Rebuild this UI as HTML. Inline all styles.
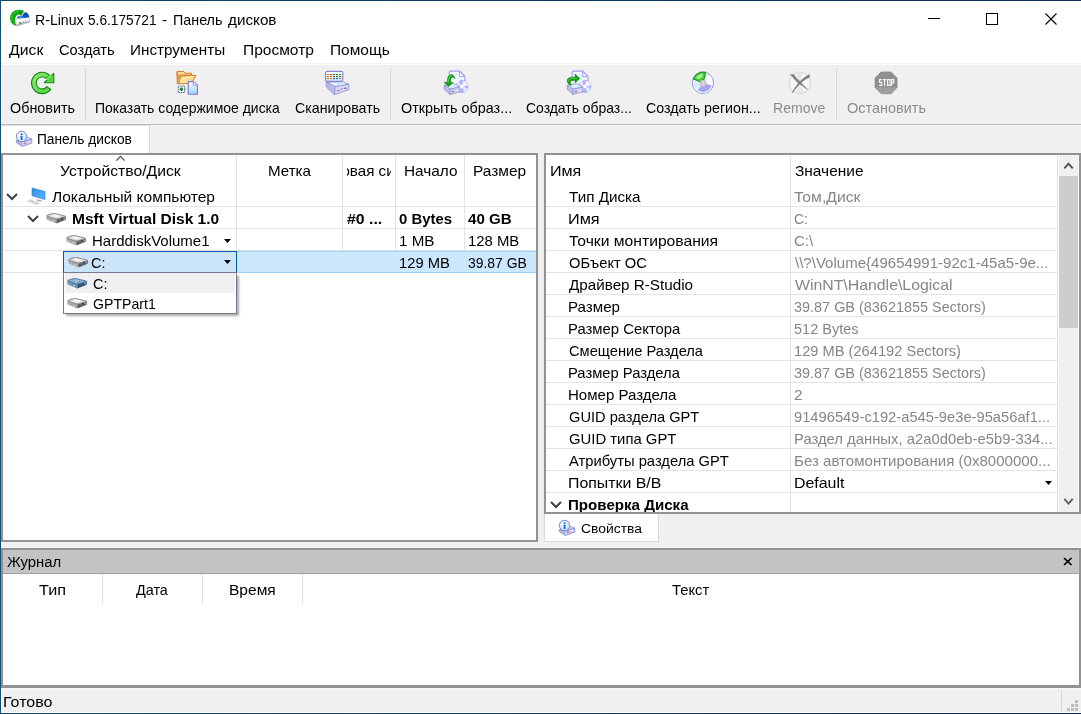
<!DOCTYPE html>
<html><head><meta charset="utf-8"><title>R-Linux</title>
<style>
html,body{margin:0;padding:0;}
body{width:1081px;height:714px;position:relative;overflow:hidden;background:#f0f0f0;font-family:"Liberation Sans",sans-serif;}
body>div,body>svg,body>span{position:absolute;}
.t{white-space:nowrap;transform-origin:0 0;display:block;}
</style></head><body>
<div style="left:0px;top:0px;width:1081px;height:64px;background:#fff;"></div>
<div style="left:0px;top:64px;width:1081px;height:60px;background:#f0f0f0;"></div>
<div style="left:0px;top:63px;width:1081px;height:1px;background:#f3f4f6;"></div>
<div style="left:0px;top:64px;width:1081px;height:1px;background:#fff;"></div>
<div style="left:1px;top:64px;width:1px;height:60px;background:#fff;"></div>
<div style="left:0px;top:124px;width:1081px;height:1px;background:#b9b9b9;"></div>
<div style="left:0px;top:125px;width:1081px;height:28px;background:#f0f0f0;"></div>
<div style="left:0px;top:123px;width:1081px;height:1px;background:#f4f4f4;"></div>
<div style="left:150px;top:125px;width:931px;height:1px;background:#f6f6f6;"></div>
<div style="left:1px;top:125px;width:148px;height:28px;background:#fff;"></div>
<div style="left:1px;top:125px;width:149px;height:1px;background:#dedede;"></div>
<div style="left:149px;top:125px;width:1px;height:28px;background:#d9d9d9;"></div>
<div style="left:1px;top:153px;width:537px;height:389px;background:#929292;"></div>
<div style="left:3px;top:155px;width:533px;height:385px;background:#fff;"></div>
<div style="left:544px;top:153px;width:537px;height:361px;background:#929292;"></div>
<div style="left:546px;top:155px;width:533px;height:357px;background:#fff;"></div>
<div style="left:544px;top:514px;width:115px;height:28px;background:#d9d9d9;"></div>
<div style="left:545px;top:514px;width:113px;height:27px;background:#fff;"></div>
<div style="left:1px;top:548px;width:1080px;height:140px;background:#929292;"></div>
<div style="left:3px;top:550px;width:1076px;height:23px;background:#c3c3c3;"></div>
<div style="left:3px;top:573px;width:1076px;height:1px;background:#a2a2a2;"></div>
<div style="left:3px;top:574px;width:1076px;height:111px;background:#fff;"></div>
<div style="left:0px;top:688px;width:1081px;height:25px;background:#f0f0f0;"></div>
<div style="left:0px;top:688px;width:1081px;height:1px;background:#f8f8f8;"></div>
<div style="left:0px;top:712px;width:1081px;height:1px;background:#fdfdfd;"></div>
<div style="left:0px;top:542px;width:540px;height:1px;background:#f7f7f7;"></div>
<div style="left:0px;top:547px;width:1081px;height:1px;background:#f6f6f6;"></div>
<div style="left:1px;top:688px;width:1px;height:25px;background:#fff;"></div>
<div style="left:0px;top:0px;width:1px;height:714px;background:#16506f;"></div>
<div style="left:0px;top:0px;width:1081px;height:1px;background:none;background-image:linear-gradient(to right,#0f4a69,#0a2b57);"></div>
<div style="left:0px;top:713px;width:1081px;height:1px;background:none;background-image:linear-gradient(to right,#124d6d,#0b2c56);"></div>
<span class="t" style="left:35.17px;top:11px;font-size:14.5px;line-height:19px;color:#000;transform:scaleX(0.9727)">R-Linux</span>
<span class="t" style="left:88.33px;top:11px;font-size:14.5px;line-height:19px;color:#000;transform:scaleX(0.9449)">5.6.175721</span>
<span class="t" style="left:162.47px;top:11px;font-size:14.5px;line-height:19px;color:#000;transform:scaleX(1.0509)">-</span>
<span class="t" style="left:173.15px;top:11px;font-size:14.5px;line-height:19px;color:#000;transform:scaleX(0.9863)">Панель</span>
<span class="t" style="left:227.51px;top:11px;font-size:14.5px;line-height:19px;color:#000;transform:scaleX(1.0517)">дисков</span>
<div style="left:928px;top:18px;width:12px;height:1px;background:#000;"></div>
<svg style="left:985px;top:12px" width="14" height="14"><rect x="1.5" y="1.5" width="11" height="11" fill="none" stroke="#000" stroke-width="1"/></svg>
<svg style="left:1044px;top:12px" width="14" height="14"><path d="M1.5 1.5L12.5 12.5M12.5 1.5L1.5 12.5" stroke="#000" stroke-width="1.1" fill="none"/></svg>
<span class="t" style="left:9.00px;top:41px;font-size:14.5px;line-height:19px;color:#000;transform:scaleX(1.0897)">Диск</span>
<span class="t" style="left:58.66px;top:41px;font-size:14.5px;line-height:19px;color:#000;transform:scaleX(1.0082)">Создать</span>
<span class="t" style="left:130.24px;top:41px;font-size:14.5px;line-height:19px;color:#000;transform:scaleX(1.0524)">Инструменты</span>
<span class="t" style="left:242.51px;top:41px;font-size:14.5px;line-height:19px;color:#000;transform:scaleX(1.0704)">Просмотр</span>
<span class="t" style="left:330.23px;top:41px;font-size:14.5px;line-height:19px;color:#000;transform:scaleX(1.0662)">Помощь</span>
<span class="t" style="left:9.79px;top:99px;font-size:14.5px;line-height:19px;color:#000;transform:scaleX(0.9903)">Обновить</span>
<span class="t" style="left:95.20px;top:99px;font-size:14.5px;line-height:19px;color:#000;transform:scaleX(0.9631)">Показать содержимое диска</span>
<span class="t" style="left:294.72px;top:99px;font-size:14.5px;line-height:19px;color:#000;transform:scaleX(0.9784)">Сканировать</span>
<span class="t" style="left:400.79px;top:99px;font-size:14.5px;line-height:19px;color:#000;transform:scaleX(0.9918)">Открыть образ...</span>
<span class="t" style="left:525.75px;top:99px;font-size:14.5px;line-height:19px;color:#000;transform:scaleX(0.9607)">Создать образ...</span>
<span class="t" style="left:645.72px;top:99px;font-size:14.5px;line-height:19px;color:#000;transform:scaleX(0.9816)">Создать регион...</span>
<span class="t" style="left:773.16px;top:99px;font-size:14.5px;line-height:19px;color:#8c8c8c;transform:scaleX(0.9700)">Remove</span>
<span class="t" style="left:846.79px;top:99px;font-size:14.5px;line-height:19px;color:#8c8c8c;transform:scaleX(0.9974)">Остановить</span>
<div style="left:85px;top:69px;width:1px;height:51px;background:none;background-image:repeating-linear-gradient(to bottom,#c2c2c2 0,#c2c2c2 1px,transparent 1px,transparent 2px);"></div>
<div style="left:390px;top:69px;width:1px;height:51px;background:none;background-image:repeating-linear-gradient(to bottom,#c2c2c2 0,#c2c2c2 1px,transparent 1px,transparent 2px);"></div>
<div style="left:836px;top:69px;width:1px;height:51px;background:none;background-image:repeating-linear-gradient(to bottom,#c2c2c2 0,#c2c2c2 1px,transparent 1px,transparent 2px);"></div>
<span class="t" style="left:37.40px;top:130px;font-size:14px;line-height:19px;color:#000;transform:scaleX(0.9802)">Панель дисков</span>
<div style="left:3px;top:206px;width:533px;height:1px;background:#e3e3e3;"></div>
<div style="left:3px;top:228px;width:533px;height:1px;background:#e3e3e3;"></div>
<div style="left:3px;top:250px;width:533px;height:1px;background:#e3e3e3;"></div>
<div style="left:236px;top:155px;width:1px;height:96px;background:#e3e3e3;"></div>
<div style="left:342px;top:155px;width:1px;height:96px;background:#e3e3e3;"></div>
<div style="left:395px;top:155px;width:1px;height:96px;background:#e3e3e3;"></div>
<div style="left:464px;top:155px;width:1px;height:96px;background:#e3e3e3;"></div>
<div style="left:3px;top:250px;width:60px;height:1px;background:#e3e3e3;"></div>
<div style="left:3px;top:272px;width:60px;height:1px;background:#e3e3e3;"></div>
<div style="left:237px;top:251px;width:299px;height:22px;background:#cce8ff;"></div>
<div style="left:237px;top:251px;width:299px;height:1px;background:#99d1ff;"></div>
<div style="left:237px;top:272px;width:299px;height:1px;background:#99d1ff;"></div>
<span class="t" style="left:60.02px;top:162px;font-size:14.5px;line-height:19px;color:#000;transform:scaleX(1.0829)">Устройство/Диск</span>
<span class="t" style="left:267.58px;top:162px;font-size:14.5px;line-height:19px;color:#000;transform:scaleX(1.0430)">Метка</span>
<div style="left:347px;top:155px;width:44px;height:30px;overflow:hidden;background:none"><span class="t" style="position:absolute;left:-43.2px;top:7px;font-size:14.5px;line-height:19px;transform:scaleX(1.045)">Файловая система</span></div>
<span class="t" style="left:403.50px;top:162px;font-size:14.5px;line-height:19px;color:#000;transform:scaleX(1.0584)">Начало</span>
<span class="t" style="left:473.49px;top:162px;font-size:14.5px;line-height:19px;color:#000;transform:scaleX(1.0643)">Размер</span>
<svg style="left:115px;top:155px" width="12" height="7"><path d="M1.3 5.6L5.5 1.4L9.7 5.6" stroke="#444" stroke-width="1.1" fill="none"/></svg>
<span class="t" style="left:52.00px;top:188px;font-size:14.5px;line-height:19px;color:#000;transform:scaleX(1.0726)">Локальный компьютер</span>
<span class="t" style="left:72.38px;top:210px;font-size:14.5px;line-height:19px;font-weight:bold;color:#000;transform:scaleX(1.0703)">Msft Virtual Disk 1.0</span>
<span class="t" style="left:346.81px;top:210px;font-size:14.5px;line-height:19px;font-weight:bold;color:#000;transform:scaleX(1.0927)">#0 ...</span>
<span class="t" style="left:398.91px;top:210px;font-size:14.5px;line-height:19px;font-weight:bold;color:#000;transform:scaleX(1.0270)">0 Bytes</span>
<span class="t" style="left:468.38px;top:210px;font-size:14.5px;line-height:19px;font-weight:bold;color:#000;transform:scaleX(1.0419)">40 GB</span>
<span class="t" style="left:92.04px;top:232px;font-size:14.5px;line-height:19px;color:#000;transform:scaleX(1.0339)">HarddiskVolume1</span>
<span class="t" style="left:398.89px;top:232px;font-size:14.5px;line-height:19px;color:#000;transform:scaleX(1.0449)">1 MB</span>
<span class="t" style="left:467.92px;top:232px;font-size:14.5px;line-height:19px;color:#000;transform:scaleX(1.0245)">128 MB</span>
<div style="left:63px;top:251px;width:174px;height:22px;background:#0b58a6;"></div>
<div style="left:64px;top:252px;width:172px;height:20px;background:#cce4f7;"></div>
<span class="t" style="left:90.72px;top:254px;font-size:14.5px;line-height:19px;color:#000;transform:scaleX(0.9966)">C:</span>
<span class="t" style="left:398.92px;top:254px;font-size:14.5px;line-height:19px;color:#000;transform:scaleX(1.0180)">129 MB</span>
<span class="t" style="left:467.54px;top:254px;font-size:14.5px;line-height:19px;color:#000;transform:scaleX(0.9608)">39.87 GB</span>
<svg style="left:224px;top:239px" width="7" height="4"><path d="M0 0H7L3.5 4Z" fill="#000"/></svg>
<svg style="left:224px;top:260px" width="7" height="4"><path d="M0 0H7L3.5 4Z" fill="#000"/></svg>
<svg style="left:1045px;top:481px" width="7" height="4"><path d="M0 0H7L3.5 4Z" fill="#000"/></svg>
<svg style="left:6.4px;top:192.8px" width="12" height="8"><path d="M1 1L6 6L11 1" stroke="#404040" stroke-width="2" fill="none"/></svg>
<svg style="left:26.6px;top:214.8px" width="12" height="8"><path d="M1 1L6 6L11 1" stroke="#404040" stroke-width="2" fill="none"/></svg>
<svg style="left:549.6px;top:500.8px" width="12" height="8"><path d="M1 1L6 6L11 1" stroke="#404040" stroke-width="2" fill="none"/></svg>
<div style="left:66px;top:276px;width:172.5px;height:39.5px;background:rgba(0,0,0,0.33);filter:blur(1px);"></div>
<div style="left:63px;top:272px;width:174px;height:42px;background:#77778c;"></div>
<div style="left:64px;top:273px;width:172px;height:40px;background:#fff;"></div>
<div style="left:65px;top:273px;width:170px;height:20px;background:#f0f0f0;"></div>
<span class="t" style="left:92.72px;top:275px;font-size:14.5px;line-height:19px;color:#000;transform:scaleX(0.9966)">C:</span>
<span class="t" style="left:92.71px;top:295px;font-size:14.5px;line-height:19px;color:#000;transform:scaleX(0.9734)">GPTPart1</span>
<div style="left:546px;top:206px;width:512px;height:1px;background:#e3e3e3;"></div>
<div style="left:546px;top:228px;width:512px;height:1px;background:#e3e3e3;"></div>
<div style="left:546px;top:250px;width:512px;height:1px;background:#e3e3e3;"></div>
<div style="left:546px;top:272px;width:512px;height:1px;background:#e3e3e3;"></div>
<div style="left:546px;top:294px;width:512px;height:1px;background:#e3e3e3;"></div>
<div style="left:546px;top:316px;width:512px;height:1px;background:#e3e3e3;"></div>
<div style="left:546px;top:338px;width:512px;height:1px;background:#e3e3e3;"></div>
<div style="left:546px;top:360px;width:512px;height:1px;background:#e3e3e3;"></div>
<div style="left:546px;top:382px;width:512px;height:1px;background:#e3e3e3;"></div>
<div style="left:546px;top:404px;width:512px;height:1px;background:#e3e3e3;"></div>
<div style="left:546px;top:426px;width:512px;height:1px;background:#e3e3e3;"></div>
<div style="left:546px;top:448px;width:512px;height:1px;background:#e3e3e3;"></div>
<div style="left:546px;top:470px;width:512px;height:1px;background:#e3e3e3;"></div>
<div style="left:546px;top:492px;width:512px;height:1px;background:#e3e3e3;"></div>
<div style="left:790px;top:155px;width:1px;height:357px;background:#e3e3e3;"></div>
<div style="left:1057px;top:155px;width:1px;height:357px;background:#e3e3e3;"></div>
<div style="left:1059px;top:155px;width:19px;height:357px;background:#f0f0f0;"></div>
<div style="left:1059px;top:176px;width:19px;height:152px;background:#cdcdcd;"></div>
<svg style="left:1062px;top:160px" width="13" height="10"><path d="M2.3 8.4L6.5 3.6L10.7 8.4" stroke="#505050" stroke-width="1.9" fill="none"/></svg>
<svg style="left:1062px;top:497px" width="13" height="10"><path d="M2.3 1.8L6.5 6.6L10.7 1.8" stroke="#606060" stroke-width="1.9" fill="none"/></svg>
<span class="t" style="left:550.40px;top:162px;font-size:14.5px;line-height:19px;color:#000;transform:scaleX(1.1081)">Имя</span>
<span class="t" style="left:795.40px;top:162px;font-size:14.5px;line-height:19px;color:#000;transform:scaleX(1.0656)">Значение</span>
<span class="t" style="left:568.92px;top:188px;font-size:14.5px;line-height:19px;color:#000;transform:scaleX(1.0515)">Тип Диска</span>
<span class="t" style="left:794.39px;top:188px;font-size:14.5px;line-height:19px;color:#868686;transform:scaleX(1.0842)">Том,Диск</span>
<span class="t" style="left:568.15px;top:210px;font-size:14.5px;line-height:19px;color:#000;transform:scaleX(1.1169)">Имя</span>
<span class="t" style="left:793.67px;top:210px;font-size:14.5px;line-height:19px;color:#868686;transform:scaleX(0.9585)">C:</span>
<span class="t" style="left:568.88px;top:232px;font-size:14.5px;line-height:19px;color:#000;transform:scaleX(1.0802)">Точки монтирования</span>
<span class="t" style="left:793.61px;top:232px;font-size:14.5px;line-height:19px;color:#868686;transform:scaleX(1.0289)">C:\</span>
<span class="t" style="left:569.01px;top:254px;font-size:14.5px;line-height:19px;color:#000;transform:scaleX(1.0124)">ОБъект ОС</span>
<span class="t" style="left:794.71px;top:254px;font-size:14.5px;line-height:19px;color:#868686;transform:scaleX(1.0374)">\\?\Volume{49654991-92c1-45a5-9e...</span>
<span class="t" style="left:569.24px;top:276px;font-size:14.5px;line-height:19px;color:#000;transform:scaleX(1.0495)">Драйвер R-Studio</span>
<span class="t" style="left:794.58px;top:276px;font-size:14.5px;line-height:19px;color:#868686;transform:scaleX(1.0918)">WinNT\Handle\Logical</span>
<span class="t" style="left:568.29px;top:298px;font-size:14.5px;line-height:19px;color:#000;transform:scaleX(1.0432)">Размер</span>
<span class="t" style="left:793.73px;top:298px;font-size:14.5px;line-height:19px;color:#868686;transform:scaleX(0.9954)">39.87 GB (83621855 Sectors)</span>
<span class="t" style="left:568.32px;top:320px;font-size:14.5px;line-height:19px;color:#000;transform:scaleX(1.0256)">Размер Сектора</span>
<span class="t" style="left:793.50px;top:320px;font-size:14.5px;line-height:19px;color:#868686;transform:scaleX(1.0011)">512 Bytes</span>
<span class="t" style="left:568.92px;top:342px;font-size:14.5px;line-height:19px;color:#000;transform:scaleX(1.0112)">Смещение Раздела</span>
<span class="t" style="left:793.95px;top:342px;font-size:14.5px;line-height:19px;color:#868686;transform:scaleX(1.0107)">129 MB (264192 Sectors)</span>
<span class="t" style="left:568.32px;top:364px;font-size:14.5px;line-height:19px;color:#000;transform:scaleX(1.0181)">Размер Раздела</span>
<span class="t" style="left:793.73px;top:364px;font-size:14.5px;line-height:19px;color:#868686;transform:scaleX(0.9954)">39.87 GB (83621855 Sectors)</span>
<span class="t" style="left:568.31px;top:386px;font-size:14.5px;line-height:19px;color:#000;transform:scaleX(1.0361)">Номер Раздела</span>
<span class="t" style="left:793.59px;top:386px;font-size:14.5px;line-height:19px;color:#868686;transform:scaleX(1.0620)">2</span>
<span class="t" style="left:568.92px;top:408px;font-size:14.5px;line-height:19px;color:#000;transform:scaleX(1.0097)">GUID раздела GPT</span>
<span class="t" style="left:793.69px;top:408px;font-size:14.5px;line-height:19px;color:#868686;transform:scaleX(1.0150)">91496549-c192-a545-9e3e-95a56af1...</span>
<span class="t" style="left:568.92px;top:430px;font-size:14.5px;line-height:19px;color:#000;transform:scaleX(1.0254)">GUID типа GPT</span>
<span class="t" style="left:793.83px;top:430px;font-size:14.5px;line-height:19px;color:#868686;transform:scaleX(1.0222)">Раздел данных, a2a0d0eb-e5b9-334...</span>
<span class="t" style="left:569.06px;top:452px;font-size:14.5px;line-height:19px;color:#000;transform:scaleX(1.0170)">Атрибуты раздела GPT</span>
<span class="t" style="left:793.81px;top:452px;font-size:14.5px;line-height:19px;color:#868686;transform:scaleX(1.0384)">Без автомонтирования (0x8000000...</span>
<span class="t" style="left:568.23px;top:474px;font-size:14.5px;line-height:19px;color:#000;transform:scaleX(1.0943)">Попытки В/В</span>
<span class="t" style="left:793.70px;top:474px;font-size:14.5px;line-height:19px;color:#000;transform:scaleX(1.0973)">Default</span>
<span class="t" style="left:568.35px;top:496px;font-size:14.5px;line-height:19px;font-weight:bold;color:#000;transform:scaleX(1.0413)">Проверка Диска</span>
<div style="left:544px;top:512px;width:537px;height:2px;background:#929292;"></div>
<span class="t" style="left:581.04px;top:520px;font-size:13.7px;line-height:17px;color:#000;transform:scaleX(1.0144)">Свойства</span>
<span class="t" style="left:7.37px;top:553px;font-size:14px;line-height:19px;color:#000;transform:scaleX(1.0601)">Журнал</span>
<svg style="left:1063px;top:557px" width="10" height="9"><path d="M1 1L8.5 8M8.5 1L1 8" stroke="#000" stroke-width="1.7" fill="none"/></svg>
<div style="left:102px;top:574px;width:1px;height:30px;background:#e0e0e0;"></div>
<div style="left:202px;top:574px;width:1px;height:30px;background:#e0e0e0;"></div>
<div style="left:302px;top:574px;width:1px;height:30px;background:#e0e0e0;"></div>
<span class="t" style="left:39.14px;top:581px;font-size:14.5px;line-height:19px;color:#000;transform:scaleX(1.1176)">Тип</span>
<span class="t" style="left:136.00px;top:581px;font-size:14.5px;line-height:19px;color:#000;transform:scaleX(0.9928)">Дата</span>
<span class="t" style="left:228.99px;top:581px;font-size:14.5px;line-height:19px;color:#000;transform:scaleX(1.0723)">Время</span>
<span class="t" style="left:671.68px;top:581px;font-size:14.5px;line-height:19px;color:#000;transform:scaleX(1.0174)">Текст</span>
<span class="t" style="left:2.68px;top:693px;font-size:14.5px;line-height:19px;color:#000;transform:scaleX(1.1025)">Готово</span>
<div style="left:1061px;top:690px;width:1px;height:21px;background:#d7d7d7;"></div>
<div style="left:1075px;top:700px;width:3px;height:3px;background:#bfbfbf;"></div>
<div style="left:1071px;top:704px;width:3px;height:3px;background:#bfbfbf;"></div>
<div style="left:1075px;top:704px;width:3px;height:3px;background:#bfbfbf;"></div>
<div style="left:1067px;top:708px;width:3px;height:3px;background:#bfbfbf;"></div>
<div style="left:1071px;top:708px;width:3px;height:3px;background:#bfbfbf;"></div>
<div style="left:1075px;top:708px;width:3px;height:3px;background:#bfbfbf;"></div>
<svg width="0" height="0" style="left:0;top:0"><defs>
<linearGradient id="gGreen" x1="0" y1="0" x2="1" y2="1"><stop offset="0" stop-color="#8df07a"/><stop offset="1" stop-color="#4fcf3c"/></linearGradient>
<linearGradient id="gGreenD" x1="0" y1="0" x2="1" y2="0"><stop offset="0" stop-color="#1fae1a"/><stop offset="0.5" stop-color="#3fcf3a"/><stop offset="1" stop-color="#0c8a10"/></linearGradient>
<linearGradient id="gCard" x1="0" y1="0" x2="0" y2="1"><stop offset="0" stop-color="#ffffff"/><stop offset="1" stop-color="#c6e6ff"/></linearGradient>
<linearGradient id="gDoc" x1="0" y1="0" x2="0" y2="1"><stop offset="0" stop-color="#ffffff"/><stop offset="1" stop-color="#9fd2ff"/></linearGradient>
<linearGradient id="gFold" x1="0" y1="0" x2="0" y2="1"><stop offset="0" stop-color="#f7b85e"/><stop offset="1" stop-color="#fde9a8"/></linearGradient>
<linearGradient id="gMon" x1="0" y1="0" x2="1" y2="1"><stop offset="0" stop-color="#2f8fe6"/><stop offset="1" stop-color="#5db4fb"/></linearGradient>
<radialGradient id="gTop" cx="0.5" cy="0.45" r="0.5"><stop offset="0" stop-color="#ffffff"/><stop offset="0.55" stop-color="#e2e2e2"/><stop offset="1" stop-color="#bdbdbd"/></radialGradient>
<radialGradient id="gTopB" cx="0.5" cy="0.45" r="0.5"><stop offset="0" stop-color="#a6c4dc"/><stop offset="1" stop-color="#6b93b8"/></radialGradient>
<radialGradient id="gInfo" cx="0.4" cy="0.35" r="0.7"><stop offset="0" stop-color="#ffffff"/><stop offset="1" stop-color="#bfe2fb"/></radialGradient>
</defs></svg>
<svg style="left:4px;top:4px;" width="30" height="30" viewBox="0 0 30 30"><path d="M18.4 12.2Q19 8.4 22 8.2Q24.8 9.6 25.4 13.8L19 14.2Z" fill="#0e4bb8"/><path d="M12.8 13.2Q14.6 11.2 17 11.8L19.4 11.2L20.2 14.4L13.6 15.2Z" fill="#1f6ad6"/><path d="M11 16.9L13.6 14.7L25.6 13.6L25.6 17.7L12.8 21.5Z" fill="#f1f1f3" stroke="#b9b9c6" stroke-width="0.5"/><path d="M12 17.1L14 15.3L25 14.3L25 15.4L13 17.6Z" fill="#ffffff"/><path d="M12.8 20.2L25.6 16.6L25.6 18.6L13 22.4Z" fill="#a6a6b4" opacity="0.75"/><path d="M14.4 13.6Q16 12.6 17.8 13.2" stroke="#86b8f4" stroke-width="0.8" fill="none"/><rect x="16.1" y="18" width="1.2" height="1.8" fill="#1aa51a"/><rect x="15.2" y="18.2" width="0.8" height="1.6" fill="#4a78d8"/><rect x="19.2" y="17.2" width="0.9" height="0.9" fill="#5a80e0"/><rect x="21.2" y="16.4" width="0.9" height="0.9" fill="#8aa0e8"/><path d="M12.6 21.9Q9 21.4 6.9 18.2Q5.4 14.8 6.4 11.2Q7.8 7.6 11.2 6.2Q15.2 5.2 18.6 6L19.8 7.6Q18 9.4 16.8 11.2Q15.6 10.2 14 10.6Q12.2 11.6 11.4 13.4Q10.4 16 11.2 18.4Q11.8 20.4 12.6 21.9Z" fill="#12a612"/><path d="M8 17.4Q7 14 8.6 10.8Q10.4 7.8 14.2 7.2" stroke="#3fd03c" stroke-width="1" fill="none"/><path d="M14.6 9.4L19.6 7.2L17.2 11.6Z" fill="#0b8f0f"/></svg>
<svg style="left:26px;top:66px;" width="34" height="34" viewBox="0 0 34 34"><path d="M23.4 9.0A10.7 10.7 0 1 0 24.7 23.5L20.9 20.6A6 6 0 1 1 20.2 12.5Z" fill="url(#gGreen)" stroke="#12850f" stroke-width="1.1" stroke-linejoin="round"/><path d="M27.8 7.3L27.8 16.7L18.4 16.7Z" fill="#5fd84c" stroke="#12850f" stroke-width="1.1" stroke-linejoin="round"/><path d="M20.1 12.7L23.6 8.8L26 10.4L22 14.6Z" fill="#6ee05a"/><rect x="23" y="12" width="3" height="3" fill="#4fc63d"/></svg>
<svg style="left:172px;top:66px;" width="34" height="34" viewBox="0 0 34 34"><path d="M5.2 5.4L11.6 5.4L13.2 7.2L19.6 7.2L19.6 9.2L5.2 9.2Z" fill="#fbd9a0" stroke="#d27d1c" stroke-width="1"/><path d="M5.2 5.8L5.2 17.6L19.6 17.6L23.8 9.4L9.4 9.4L5.6 16.6Z" fill="url(#gFold)" stroke="#d27d1c" stroke-width="1" stroke-linejoin="round"/><path d="M5.2 5.8L5.2 17.6L8.2 17.6L8.2 11Z" fill="#e89a3c"/><path d="M8.6 16.8L10.4 12.8Q13 13.2 14.6 11.8Q17 12.2 19 10.6L22 10.6" stroke="#fff7d8" stroke-width="1.2" fill="none"/><path d="M16.2 15.6L21.4 15.6L25.4 19.2L25.4 28.2L16.2 28.2Z" fill="url(#gDoc)" stroke="#7c78cc" stroke-width="1.1" stroke-linejoin="round"/><path d="M21.4 15.6L21.4 19.2L25.4 19.2Z" fill="#fff" stroke="#8a86e0" stroke-width="0.9" stroke-linejoin="round"/><rect x="6.3" y="20.1" width="6.2" height="6.4" fill="#e6f8e6" stroke="#4a58a0" stroke-width="0.9" stroke-dasharray="1.4 0.7"/><path d="M9.4 21.6L9.4 25M7.7 23.3L11.1 23.3" stroke="#0c7a14" stroke-width="1.5"/><path d="M12.6 23.3L14 23.3" stroke="#7c78cc" stroke-width="0.9"/></svg>
<svg style="left:320px;top:66px;" width="34" height="34" viewBox="0 0 34 34"><path d="M6.2 16.2L22.4 15.7L28.8 18.3L15.2 20.5Z" fill="#e2f4ff" stroke="#8f8bd0" stroke-width="0.8" stroke-linejoin="round"/><path d="M6.2 16.2L15.2 20.5L14.3 28.6L6.2 21Z" fill="#c4c6f2" stroke="#8f8bd0" stroke-width="0.8" stroke-linejoin="round"/><path d="M7.2 18.2L13.8 22.8M7.2 20L13.6 25" stroke="#9a9ad8" stroke-width="0.8"/><path d="M15.2 20.5L28.8 18.3L28.8 23.8L14.3 28.6Z" fill="#d4d6fa" stroke="#8f8bd0" stroke-width="0.8" stroke-linejoin="round"/><rect x="17" y="24" width="2.2" height="1.1" fill="#d86a10"/><rect x="24.2" y="21.6" width="2.2" height="1.4" fill="#5a7a8a"/><path d="M20 23.4L23.4 22.6" stroke="#8f8bd0" stroke-width="0.9"/><path d="M17.6 15.2L20.2 19.8" stroke="#a8dcff" stroke-width="1.4"/><rect x="5.5" y="5.4" width="17.4" height="10" rx="1.6" fill="url(#gCard)" stroke="#8a86cc" stroke-width="1.1"/><rect x="7.0" y="8.0" width="2" height="1.1" fill="#e07a10"/><rect x="10.0" y="8.0" width="2" height="1.1" fill="#b8400c"/><rect x="13.0" y="8.0" width="2" height="1.1" fill="#128a1c"/><rect x="16.0" y="8.0" width="2" height="1.1" fill="#128a1c"/><rect x="19.0" y="8.0" width="2" height="1.1" fill="#128a1c"/><rect x="7.0" y="10.0" width="2" height="1.1" fill="#e07a10"/><rect x="10.0" y="10.0" width="2" height="1.1" fill="#e07a10"/><rect x="13.0" y="10.0" width="2" height="1.1" fill="#b8400c"/><rect x="16.0" y="10.0" width="2" height="1.1" fill="#128a1c"/><rect x="19.0" y="10.0" width="2" height="1.1" fill="#b8400c"/><rect x="7.0" y="12.0" width="2" height="1.1" fill="#e07a10"/><rect x="10.0" y="12.0" width="2" height="1.1" fill="#e07a10"/><rect x="13.0" y="12.0" width="2" height="1.1" fill="#1464d2"/><rect x="16.0" y="12.0" width="2" height="1.1" fill="#1464d2"/><rect x="19.0" y="12.0" width="2" height="1.1" fill="#e07a10"/></svg>
<svg style="left:438px;top:66px;" width="34" height="34" viewBox="0 0 34 34"><path d="M11.2 12.4L11.2 6.8Q11.2 5.2 12.8 5.2L21.8 5.2L26.8 10.4L26.8 15.4" fill="#f4f8ff" stroke="#a0a0f2" stroke-width="1.2" stroke-linejoin="round"/><path d="M11.8 12.4L11.8 7.2L21 7.2L21 11L25.6 11L25.6 15L17 19L11.8 17Z" fill="#eef6ff"/><path d="M21.6 5.4L21.6 10.6L26.6 10.6Z" fill="#fbfdff" stroke="#a0a0f2" stroke-width="1" stroke-linejoin="round"/><circle cx="23.8" cy="20.5" r="6.1" fill="#b2b2f4" stroke="#9c9ce8" stroke-width="0.7"/><path d="M23.8 20.5L25.4 14.7A6 6 0 0 1 29.8 19.4Z" fill="#f2f4ff"/><path d="M23.8 20.5L29.6 22.4A6 6 0 0 1 26.4 25.9Z" fill="#e0f0ff"/><path d="M23.8 20.5L18 19.2A6 6 0 0 1 20.6 15.4Z" fill="#dfe2fb"/><path d="M23.8 20.5L22 26.2A6 6 0 0 1 18.4 23Z" fill="#cfd2f8"/><path d="M17.4 17.2L21.8 14.6" stroke="#fff" stroke-width="1"/><circle cx="23.6" cy="20.6" r="1.7" fill="#fff"/><g transform="translate(6.2,17.6)"><path d="M0 1.6L9.6 0L15.6 3.4L5.8 5.6Z" fill="#d9ecff" stroke="#8f8bd0" stroke-width="0.7" stroke-linejoin="round"/><path d="M0 1.6L5.8 5.6L5.8 10.9L0 5.8Z" fill="#bfc3f2" stroke="#8f8bd0" stroke-width="0.7" stroke-linejoin="round"/><path d="M5.8 5.6L15.6 3.4L15.6 8.2L5.8 10.9Z" fill="#c9ccf6" stroke="#8f8bd0" stroke-width="0.7" stroke-linejoin="round"/><rect x="7.6" y="7.4" width="2.2" height="1.1" fill="#d86a10"/><path d="M10.8 7.4L14.2 6.6" stroke="#f4f4ff" stroke-width="0.9"/></g><path d="M17.2 12.6Q16.6 9.8 13.6 8.2Q10.6 8.6 9.6 12L9.4 16.2L6 16.2L10.5 20.8L15 16.2L12.6 16.2L12.8 12.6Q13.6 10.8 15 11.2Q16.2 11.6 17.2 12.6Z" fill="#14a014" stroke="#0b7d0f" stroke-width="0.5" stroke-linejoin="round"/><path d="M10.6 16.4L10.8 12.2Q11.6 9.6 13.6 9.2" stroke="#4fd44a" stroke-width="1" fill="none"/></svg>
<svg style="left:561px;top:66px;" width="34" height="34" viewBox="0 0 34 34"><path d="M11.2 12.4L11.2 6.8Q11.2 5.2 12.8 5.2L21.8 5.2L26.8 10.4L26.8 15.4" fill="#f4f8ff" stroke="#a0a0f2" stroke-width="1.2" stroke-linejoin="round"/><path d="M11.8 12.4L11.8 7.2L21 7.2L21 11L25.6 11L25.6 15L17 19L11.8 17Z" fill="#eef6ff"/><path d="M21.6 5.4L21.6 10.6L26.6 10.6Z" fill="#fbfdff" stroke="#a0a0f2" stroke-width="1" stroke-linejoin="round"/><circle cx="23.8" cy="20.5" r="6.1" fill="#b2b2f4" stroke="#9c9ce8" stroke-width="0.7"/><path d="M23.8 20.5L25.4 14.7A6 6 0 0 1 29.8 19.4Z" fill="#f2f4ff"/><path d="M23.8 20.5L29.6 22.4A6 6 0 0 1 26.4 25.9Z" fill="#e0f0ff"/><path d="M23.8 20.5L18 19.2A6 6 0 0 1 20.6 15.4Z" fill="#dfe2fb"/><path d="M23.8 20.5L22 26.2A6 6 0 0 1 18.4 23Z" fill="#cfd2f8"/><path d="M17.4 17.2L21.8 14.6" stroke="#fff" stroke-width="1"/><circle cx="23.6" cy="20.6" r="1.7" fill="#fff"/><g transform="translate(6.2,17.6)"><path d="M0 1.6L9.6 0L15.6 3.4L5.8 5.6Z" fill="#d9ecff" stroke="#8f8bd0" stroke-width="0.7" stroke-linejoin="round"/><path d="M0 1.6L5.8 5.6L5.8 10.9L0 5.8Z" fill="#bfc3f2" stroke="#8f8bd0" stroke-width="0.7" stroke-linejoin="round"/><path d="M5.8 5.6L15.6 3.4L15.6 8.2L5.8 10.9Z" fill="#c9ccf6" stroke="#8f8bd0" stroke-width="0.7" stroke-linejoin="round"/><rect x="7.6" y="7.4" width="2.2" height="1.1" fill="#d86a10"/><path d="M10.8 7.4L14.2 6.6" stroke="#f4f4ff" stroke-width="0.9"/></g><path d="M9.6 19.6Q5.6 17 6.2 14Q7 11.2 10.6 11.2L14 11.2L14 8L18.9 12.4L14.2 16.8L14 14.4L11 14.4Q9.2 14.6 9.2 16.2Q9.2 17.6 10.4 19Z" fill="#14a014" stroke="#0b7d0f" stroke-width="0.5" stroke-linejoin="round"/><path d="M7.4 15.4Q7.6 12.6 10.6 12.3L15.6 12.3" stroke="#4fd44a" stroke-width="1" fill="none"/></svg>
<svg style="left:686px;top:66px;" width="34" height="34" viewBox="0 0 34 34"><circle cx="16.9" cy="16.9" r="10.7" fill="#fbfcff" stroke="#9898e4" stroke-width="1"/><path d="M16.9 16.9L25.6 19.2A9 9 0 0 1 11.7 24.3Z" fill="#a4a4f2"/><path d="M13 25.6A10 10 0 0 0 20.5 26.2" stroke="#d9f1ff" stroke-width="1.3" fill="none"/><path d="M16.9 16.9L11.7 24.3A9.4 9.4 0 0 1 7.6 14.6Z" fill="#d4f0ff"/><path d="M16.9 16.9L20 7A10.4 10.4 0 0 1 22.4 8.2L18.4 14Z" fill="#d8dafc"/><path d="M19.6 6.1L14.4 6.2Q9.4 7.6 7 12.9L14.2 15.9Q16 13.8 18.2 13.2Z" fill="#43cf34" stroke="#0d8f10" stroke-width="0.9" stroke-linejoin="round"/><path d="M10 11.8Q12.2 8.4 16.8 7.6L16.4 11.4Q13.8 12 12.6 13.4Z" fill="#a4f094"/><circle cx="17.1" cy="17.4" r="3.3" fill="#cfcfcf" stroke="#a8a8c8" stroke-width="0.5"/><circle cx="17.4" cy="17.5" r="0.9" fill="#f0d890"/></svg>
<svg style="left:783px;top:66px;" width="34" height="34" viewBox="0 0 34 34"><circle cx="16.9" cy="16.9" r="10.7" fill="#f7f7f7" stroke="#cfcfcf" stroke-width="0.9"/><path d="M16.9 16.9L13 7.2A10.4 10.4 0 0 1 20 7Z" fill="#e6e6e6"/><path d="M16.9 16.9L20.6 26.6A10.4 10.4 0 0 1 13.4 26.6Z" fill="#e6e6e6"/><path d="M6.4 8.2L10.8 8.2Q13.2 11.6 16.6 15L24.9 23.4L24.3 23.8L15 17Q10.4 13.2 8.8 10.2Z" fill="#858585"/><path d="M26.7 8L26.7 11.6Q21 13.6 15.6 19.6L9.4 26.9L8.8 26.2L14.6 17.8Q20.6 11 26.7 8Z" fill="#7d7d86"/></svg>
<svg style="left:869px;top:66px;" width="34" height="34" viewBox="0 0 34 34"><path d="M12.1 5.9L22.1 5.9L28.1 12.1L28.1 21.4L22.1 27.7L12.1 27.7L6 21.4L6 12.1Z" fill="#8f8f8f" stroke="#85858f" stroke-width="0.6"/><path d="M6.6 21.6L27.6 21.6L22 27.2L12.2 27.2Z" fill="#a3a3a3" opacity="0.8"/><g fill="none" stroke="#f4f4f4" stroke-width="1.2" stroke-linejoin="miter"><path d="M12.9 13.6L10.5 13.6L10.5 16.4L12.7 16.4L12.7 19.3L10.1 19.3"/><path d="M13.8 13.6L17.4 13.6M15.6 13.6L15.6 20"/><path d="M18.6 13.6L21 13.6L21 19.3L18.6 19.3Z"/><path d="M22.6 20L22.6 13.6L24.7 13.6L24.7 16.8L22.6 16.8"/></g></svg>
<svg style="left:20px;top:182px;" width="30" height="30" viewBox="0 0 30 30"><path d="M6.3 19.3L10.9 17.2L21 21.4L16.4 22.9Z" fill="#dcdcdc"/><path d="M8.2 19.2L11 18L19 21.4L16.4 22.3Z" fill="#cfcfcf" opacity="0.7"/><path d="M16 17.2L21.8 18.2L21.8 19.6L17.2 19.4Z" fill="#b4b4b4"/><path d="M12 5.9L25 9.5L25 17.6L12 13.7Z" fill="url(#gMon)" stroke="#2a7ad0" stroke-width="0.6" stroke-linejoin="round"/></svg>
<svg style="left:15px;top:129.9px;" width="18" height="18" viewBox="0 0 18 18"><path d="M1.3 10.7L7.2 11.8L7.2 16.5L1.3 12.6Z" fill="#b4b4ee" stroke="#8484cc" stroke-width="0.7"/><path d="M7.2 11.8L16.8 9.0L16.8 13.2L7.2 16.5Z" fill="#c4c4f4" stroke="#8484cc" stroke-width="0.7"/><path d="M1.3 10.7L10.5 6.4L16.8 9.0L7.2 11.8Z" fill="#d6d6fa" stroke="#8484cc" stroke-width="0.7"/><path d="M6.8 12.2L7.6 12L7.6 16.2L6.8 16.2Z" fill="#e8f8ff"/><rect x="9.1" y="12.7" width="2" height="1" fill="#d86a10"/><path d="M11.8 12.2L15.6 11.1" stroke="#f2f2ff" stroke-width="0.9"/><circle cx="6.55" cy="6.45" r="5.2" fill="url(#gInfo)" stroke="#8585c9" stroke-width="1"/><circle cx="6.55" cy="4.2" r="1.05" fill="#1273d6"/><rect x="5.6" y="5.7" width="1.9" height="4.2" rx="0.5" fill="#1273d6"/></svg>
<svg style="left:557.8px;top:519.0px;" width="18" height="18" viewBox="0 0 18 18"><path d="M1.3 10.7L7.2 11.8L7.2 16.5L1.3 12.6Z" fill="#b4b4ee" stroke="#8484cc" stroke-width="0.7"/><path d="M7.2 11.8L16.8 9.0L16.8 13.2L7.2 16.5Z" fill="#c4c4f4" stroke="#8484cc" stroke-width="0.7"/><path d="M1.3 10.7L10.5 6.4L16.8 9.0L7.2 11.8Z" fill="#d6d6fa" stroke="#8484cc" stroke-width="0.7"/><path d="M6.8 12.2L7.6 12L7.6 16.2L6.8 16.2Z" fill="#e8f8ff"/><rect x="9.1" y="12.7" width="2" height="1" fill="#d86a10"/><path d="M11.8 12.2L15.6 11.1" stroke="#f2f2ff" stroke-width="0.9"/><circle cx="6.55" cy="6.45" r="5.2" fill="url(#gInfo)" stroke="#8585c9" stroke-width="1"/><circle cx="6.55" cy="4.2" r="1.05" fill="#1273d6"/><rect x="5.6" y="5.7" width="1.9" height="4.2" rx="0.5" fill="#1273d6"/></svg>
<svg style="left:45.7px;top:213.0px;" width="21" height="12" viewBox="0 0 21 12"><path d="M0.5 2.9L10.4 6.1L10.4 10.4Q9.6 10.3 9 10L1.3 6.7Q0.3 6.3 0.3 5.3Z" fill="#a6a6a6"/><path d="M10.4 6.1L19.9 3.4L19.9 6.0Q19.9 6.7 19.2 6.9L10.4 10.4Z" fill="#636363"/><path d="M2.0 1.9L6.4 0.5Q7.3 0.2 8.3 0.4L18.9 3.0Q20.3 3.4 19.2 3.9L11.2 6.1Q10.4 6.3 9.6 6.0L1.2 3.3Q-0.2 2.6 2.0 1.9Z" fill="url(#gTop)" stroke="#858585" stroke-width="0.9"/><rect x="15.2" y="4.7" width="1.5" height="1.6" fill="#2a2a2a" opacity="0.85"/><rect x="17.5" y="4.9" width="1.8" height="1.2" fill="#8f9dff"/><rect x="6.4" y="7.2" width="1.5" height="1" fill="#f6f6f6" opacity="0.85"/><rect x="2.6" y="5.4" width="1.2" height="0.8" fill="#f0f0f0" opacity="0.6"/><rect x="11.2" y="7.4" width="1.2" height="1.4" fill="#222" opacity="0.55"/></svg>
<svg style="left:65.7px;top:235.2px;" width="21" height="12" viewBox="0 0 21 12"><path d="M0.5 2.9L10.4 6.1L10.4 10.4Q9.6 10.3 9 10L1.3 6.7Q0.3 6.3 0.3 5.3Z" fill="#a6a6a6"/><path d="M10.4 6.1L19.9 3.4L19.9 6.0Q19.9 6.7 19.2 6.9L10.4 10.4Z" fill="#636363"/><path d="M2.0 1.9L6.4 0.5Q7.3 0.2 8.3 0.4L18.9 3.0Q20.3 3.4 19.2 3.9L11.2 6.1Q10.4 6.3 9.6 6.0L1.2 3.3Q-0.2 2.6 2.0 1.9Z" fill="url(#gTop)" stroke="#858585" stroke-width="0.9"/><rect x="15.2" y="4.7" width="1.5" height="1.6" fill="#2a2a2a" opacity="0.85"/><rect x="17.5" y="4.9" width="1.8" height="1.2" fill="#8f9dff"/><rect x="6.4" y="7.2" width="1.5" height="1" fill="#f6f6f6" opacity="0.85"/><rect x="2.6" y="5.4" width="1.2" height="0.8" fill="#f0f0f0" opacity="0.6"/><rect x="11.2" y="7.4" width="1.2" height="1.4" fill="#222" opacity="0.55"/></svg>
<svg style="left:67.8px;top:256.9px;" width="21" height="12" viewBox="0 0 21 12"><path d="M0.5 2.9L10.4 6.1L10.4 10.4Q9.6 10.3 9 10L1.3 6.7Q0.3 6.3 0.3 5.3Z" fill="#a6a6a6"/><path d="M10.4 6.1L19.9 3.4L19.9 6.0Q19.9 6.7 19.2 6.9L10.4 10.4Z" fill="#636363"/><path d="M2.0 1.9L6.4 0.5Q7.3 0.2 8.3 0.4L18.9 3.0Q20.3 3.4 19.2 3.9L11.2 6.1Q10.4 6.3 9.6 6.0L1.2 3.3Q-0.2 2.6 2.0 1.9Z" fill="url(#gTop)" stroke="#858585" stroke-width="0.9"/><rect x="15.2" y="4.7" width="1.5" height="1.6" fill="#2a2a2a" opacity="0.85"/><rect x="17.5" y="4.9" width="1.8" height="1.2" fill="#8f9dff"/><rect x="6.4" y="7.2" width="1.5" height="1" fill="#f6f6f6" opacity="0.85"/><rect x="2.6" y="5.4" width="1.2" height="0.8" fill="#f0f0f0" opacity="0.6"/><rect x="11.2" y="7.4" width="1.2" height="1.4" fill="#222" opacity="0.55"/></svg>
<svg style="left:66.9px;top:277.9px;" width="21" height="12" viewBox="0 0 21 12"><path d="M0.5 2.9L10.4 6.1L10.4 10.4Q9.6 10.3 9 10L1.3 6.7Q0.3 6.3 0.3 5.3Z" fill="#6a90b4"/><path d="M10.4 6.1L19.9 3.4L19.9 6.0Q19.9 6.7 19.2 6.9L10.4 10.4Z" fill="#35597c"/><path d="M2.0 1.9L6.4 0.5Q7.3 0.2 8.3 0.4L18.9 3.0Q20.3 3.4 19.2 3.9L11.2 6.1Q10.4 6.3 9.6 6.0L1.2 3.3Q-0.2 2.6 2.0 1.9Z" fill="url(#gTopB)" stroke="#4f7aa2" stroke-width="0.9"/><rect x="15.2" y="4.7" width="1.5" height="1.6" fill="#254a68" opacity="0.85"/><rect x="17.5" y="4.9" width="1.8" height="1.2" fill="#9fb4f0"/><rect x="6.4" y="7.2" width="1.5" height="1" fill="#f6f6f6" opacity="0.85"/><rect x="2.6" y="5.4" width="1.2" height="0.8" fill="#f0f0f0" opacity="0.6"/><rect x="11.2" y="7.4" width="1.2" height="1.4" fill="#222" opacity="0.55"/><rect x="4" y="2.2" width="1.3" height="0.9" fill="#b8d6ee" opacity="0.8"/><rect x="7" y="1.4" width="1.3" height="0.9" fill="#c4b8e6" opacity="0.8"/><rect x="9.5" y="2.6" width="1.3" height="0.9" fill="#b8d6ee" opacity="0.8"/><rect x="12" y="3.4" width="1.3" height="0.9" fill="#3f7a9a" opacity="0.8"/><rect x="6" y="3.4" width="1.3" height="0.9" fill="#9a9ad8" opacity="0.8"/><rect x="14.5" y="3.0" width="1.3" height="0.9" fill="#b8d6ee" opacity="0.8"/><rect x="10.5" y="4.6" width="1.3" height="0.9" fill="#3f7a9a" opacity="0.8"/><rect x="8" y="4.2" width="1.3" height="0.9" fill="#c8e0f4" opacity="0.8"/></svg>
<svg style="left:66.9px;top:298.3px;" width="21" height="12" viewBox="0 0 21 12"><path d="M0.5 2.9L10.4 6.1L10.4 10.4Q9.6 10.3 9 10L1.3 6.7Q0.3 6.3 0.3 5.3Z" fill="#a6a6a6"/><path d="M10.4 6.1L19.9 3.4L19.9 6.0Q19.9 6.7 19.2 6.9L10.4 10.4Z" fill="#636363"/><path d="M2.0 1.9L6.4 0.5Q7.3 0.2 8.3 0.4L18.9 3.0Q20.3 3.4 19.2 3.9L11.2 6.1Q10.4 6.3 9.6 6.0L1.2 3.3Q-0.2 2.6 2.0 1.9Z" fill="url(#gTop)" stroke="#858585" stroke-width="0.9"/><rect x="15.2" y="4.7" width="1.5" height="1.6" fill="#2a2a2a" opacity="0.85"/><rect x="17.5" y="4.9" width="1.8" height="1.2" fill="#8f9dff"/><rect x="6.4" y="7.2" width="1.5" height="1" fill="#f6f6f6" opacity="0.85"/><rect x="2.6" y="5.4" width="1.2" height="0.8" fill="#f0f0f0" opacity="0.6"/><rect x="11.2" y="7.4" width="1.2" height="1.4" fill="#222" opacity="0.55"/></svg>
</body></html>
